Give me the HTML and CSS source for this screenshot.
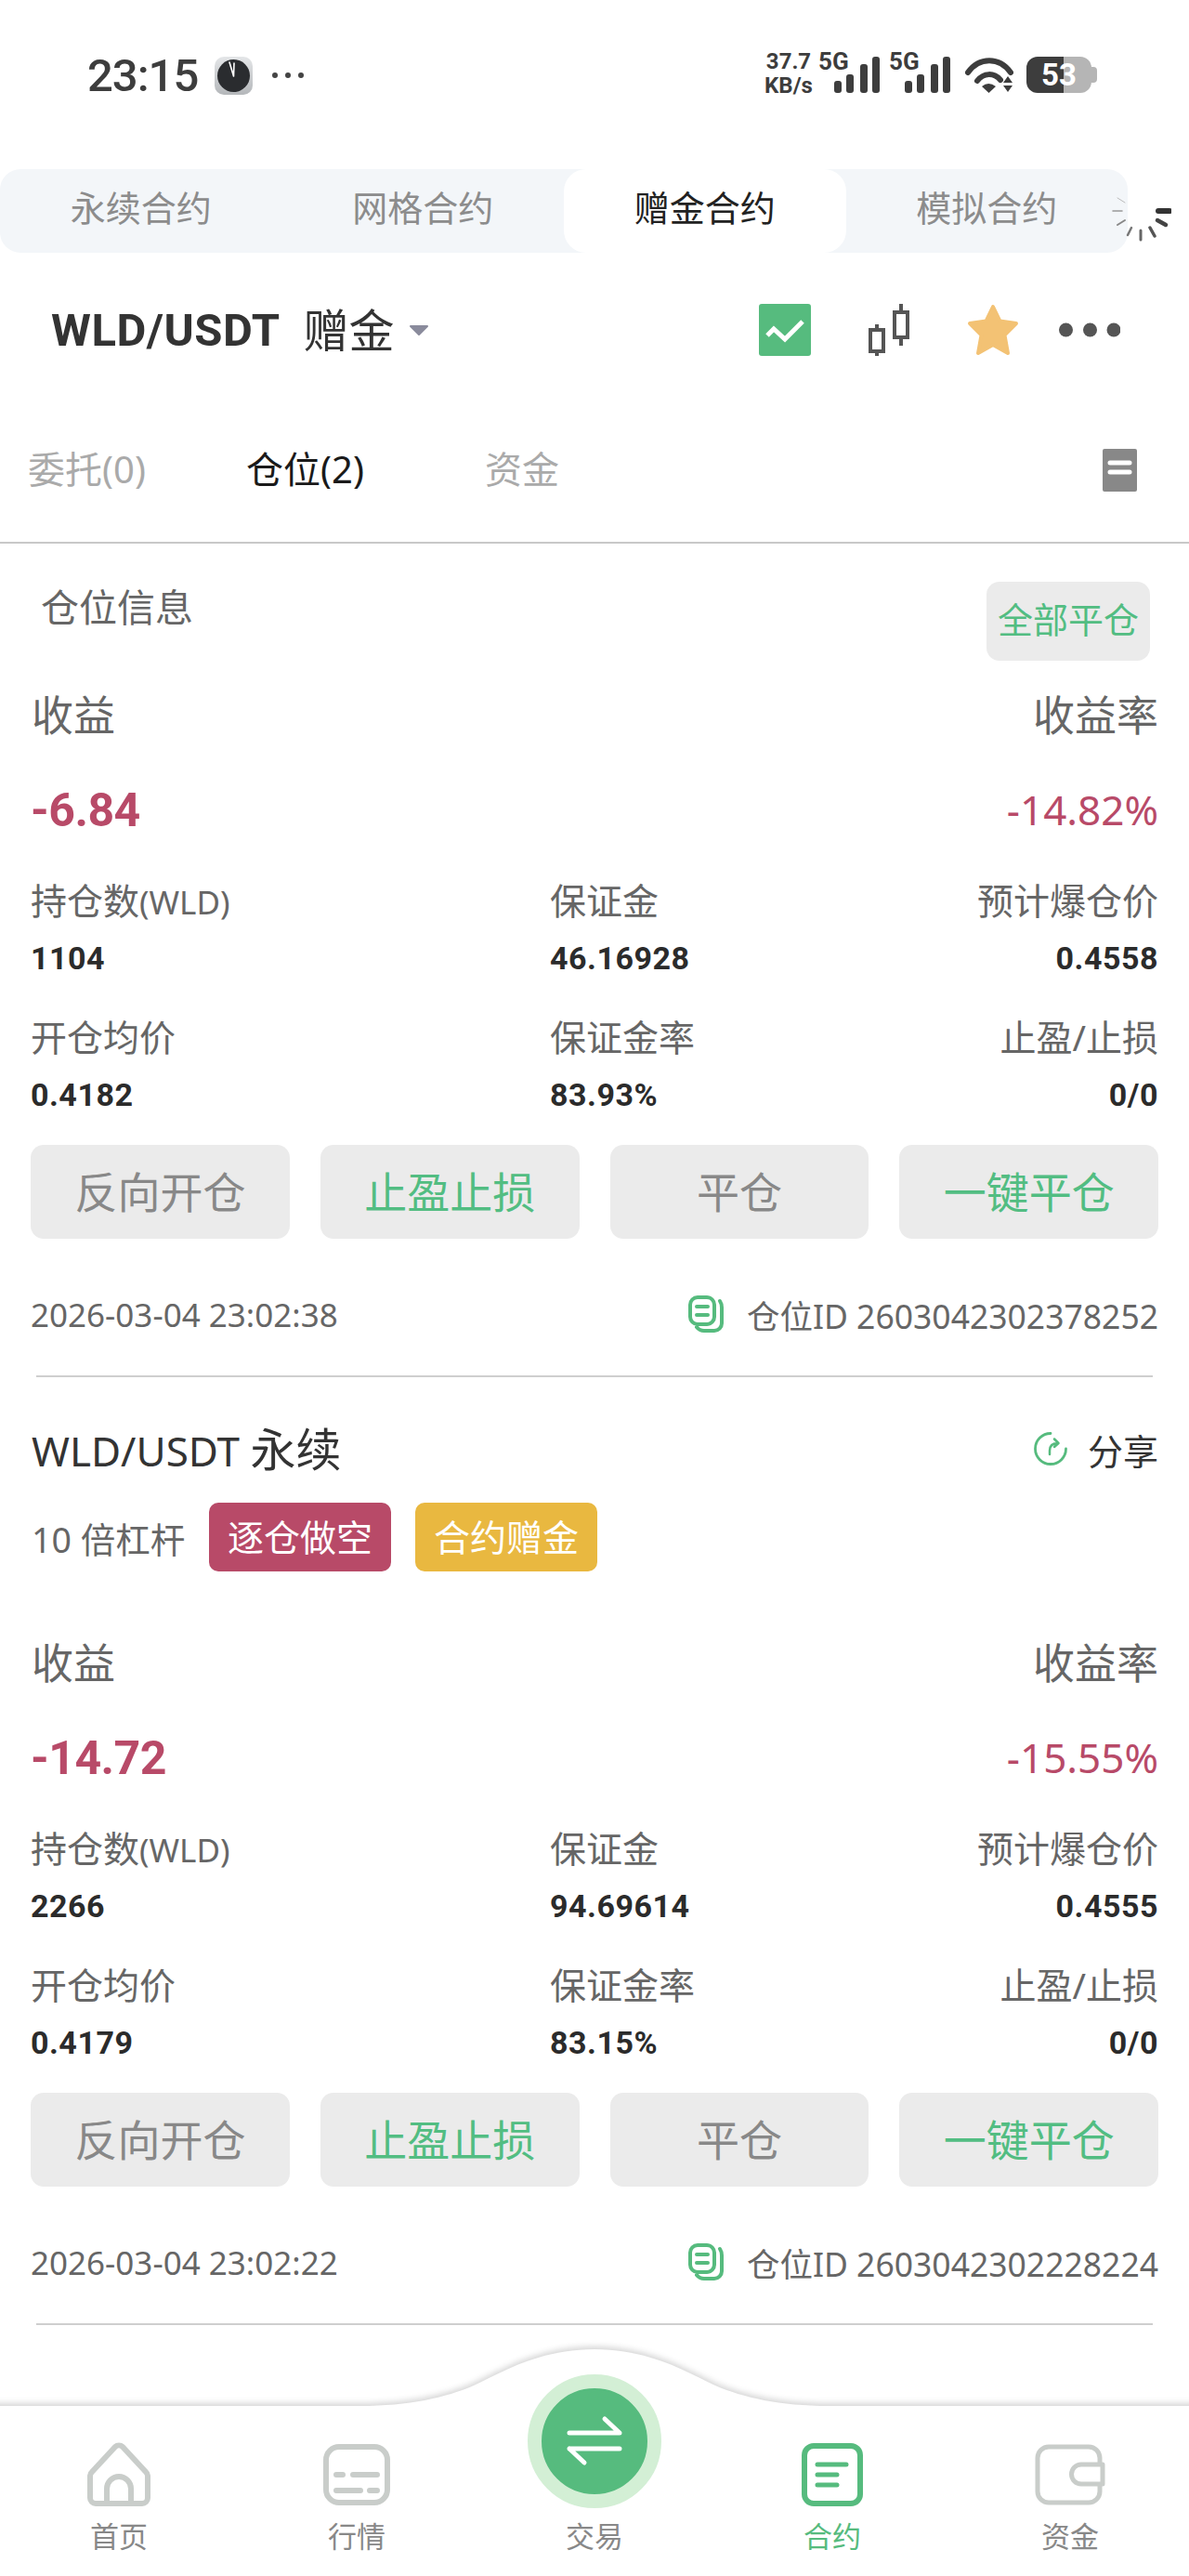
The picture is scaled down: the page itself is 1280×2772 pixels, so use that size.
FILE: index.html
```html
<!DOCTYPE html>
<html>
  <head>
    <meta charset="utf-8">
    <title>赠金合约</title>
    <link rel="stylesheet" href="styles.css">
  </head>
  <body>
    <div class="page">
      <div class="status">
        <span class="time">23:15</span>
        <svg class="clock" width="41" height="41" viewBox="0 0 41 41">
          <defs>
            <linearGradient id="silver" x1="0" y1="0" x2="0" y2="1">
              <stop offset="0" stop-color="#e4e6e8"/>
              <stop offset="1" stop-color="#b4b7ba"/>
            </linearGradient>
          </defs>
          <rect width="41" height="41" rx="10" fill="url(#silver)"/>
          <circle cx="20.5" cy="20.5" r="17.5" fill="#2a2c2f"/>
          <path d="M20.5 21 L16 6 M20.5 21 L21 7" stroke="#fff" stroke-width="1.6" stroke-linecap="round"/>
        </svg>
        <svg class="more" width="34" height="6" viewBox="0 0 34 6">
          <circle cx="3" cy="3" r="3" fill="#444"/>
          <circle cx="17" cy="3" r="3" fill="#444"/>
          <circle cx="31" cy="3" r="3" fill="#444"/>
        </svg>
        <div class="status-right">
          <div class="speed">37.7<br>KB/s</div>
          <div class="signal">
            <span class="net">5G</span>
            <svg width="49" height="39" viewBox="0 0 49 39">
              <rect x="0" y="26" width="8" height="13" rx="3" fill="#3d3d3d"/>
              <rect x="13" y="19" width="8" height="20" rx="3" fill="#3d3d3d"/>
              <rect x="28" y="8" width="8" height="31" rx="3" fill="#3d3d3d"/>
              <rect x="41" y="0" width="8" height="39" rx="3" fill="#3d3d3d"/>
            </svg>
          </div>
          <div class="signal">
            <span class="net">5G</span>
            <svg width="49" height="39" viewBox="0 0 49 39">
              <rect x="0" y="26" width="8" height="13" rx="3" fill="#3d3d3d"/>
              <rect x="13" y="19" width="8" height="20" rx="3" fill="#3d3d3d"/>
              <rect x="28" y="8" width="8" height="31" rx="3" fill="#3d3d3d"/>
              <rect x="41" y="0" width="8" height="39" rx="3" fill="#3d3d3d"/>
            </svg>
          </div>
          <svg class="wifi" width="52" height="38" viewBox="0 0 52 38">
            <path d="M3 16 C15 -1 37 -1 49 16" fill="none" stroke="#3d3d3d" stroke-width="6" stroke-linecap="round"/>
            <path d="M13 25 C20 16 31 16 38 24" fill="none" stroke="#3d3d3d" stroke-width="6" stroke-linecap="round"/>
            <path d="M18 31 Q25 25 33 31 L25.500 38 Z" fill="#3d3d3d"/>
            <path d="M46 20 L51 27 H41 Z M41 30 H51 L46 37 Z" fill="#3d3d3d"/>
          </svg>
          <div class="battery">53</div>
        </div>
      </div>

      <div class="contract-row">
        <div class="contract-tabs">
          <div class="contract-tab">永续合约</div>
          <div class="contract-tab">网格合约</div>
          <div class="contract-tab active">赠金合约</div>
          <div class="contract-tab">模拟合约</div>
        </div>
        <svg class="spinner" width="66" height="66" viewBox="-33 -33 66 66">
          <g stroke-linecap="round">
            <line x1="19" y1="0" x2="31" y2="0" stroke="#333" stroke-width="6"/>
            <line x1="18" y1="10" x2="27" y2="15" stroke="#444" stroke-width="4.500"/>
            <line x1="10" y1="18" x2="15" y2="27" stroke="#555" stroke-width="3.500"/>
            <line x1="0" y1="21" x2="0" y2="31" stroke="#666" stroke-width="3"/>
            <line x1="-10" y1="18" x2="-14" y2="26" stroke="#777" stroke-width="2.500"/>
            <line x1="-17" y1="10" x2="-25" y2="15" stroke="#888" stroke-width="2"/>
            <line x1="-20" y1="0" x2="-30" y2="0" stroke="#999" stroke-width="1.500"/>
            <line x1="-17" y1="-9" x2="-25" y2="-14" stroke="#bbb" stroke-width="1"/>
          </g>
        </svg>
      </div>

      <div class="pair-bar">
        <span class="pair-name">WLD/USDT</span>
        <span class="pair-type">赠金</span>
        <svg class="caret" width="22" height="13" viewBox="0 0 22 13">
          <path d="M2 2 H20 L11 11 Z" fill="#8a8b9c" stroke="#8a8b9c" stroke-width="2" stroke-linejoin="round"/>
        </svg>
        <div class="pair-icons">
          <svg width="56" height="56" viewBox="0 0 56 56">
            <rect width="56" height="56" rx="3" fill="#56bb7e"/>
            <path d="M9 34 L16 27 L28 38 L47 19" fill="none" stroke="#fff" stroke-width="5"/>
          </svg>
          <svg width="44" height="56" viewBox="0 0 44 56">
            <g fill="none" stroke="#555" stroke-width="4">
              <rect x="2" y="28" width="14" height="23"/>
              <path d="M9 22 V28 M9 51 V56"/>
              <rect x="28" y="9" width="14" height="27"/>
              <path d="M35 0 V9 M35 36 V45"/>
            </g>
          </svg>
          <svg width="56" height="56" viewBox="0 0 56 56">
            <polygon points="28,3 35.500,18.500 53,21 40.500,33.500 44,53 28,44 12,53 15.500,33.500 3,21 20.500,18.500" fill="#f3c274" stroke="#f3c274" stroke-width="4" stroke-linejoin="round"/>
          </svg>
          <svg class="pair-more" width="66" height="16" viewBox="0 0 66 16">
            <circle cx="7.500" cy="8" r="7.500" fill="#555"/>
            <circle cx="33.500" cy="8" r="7.500" fill="#555"/>
            <circle cx="59" cy="8" r="7.500" fill="#555"/>
          </svg>
        </div>
      </div>

      <div class="order-tabs">
        <span class="order-tab first">委托(0)</span>
        <span class="order-tab second active">仓位(2)</span>
        <span class="order-tab">资金</span>
        <svg class="order-list" width="37" height="46" viewBox="0 0 37 46">
          <rect width="37" height="46" rx="2" fill="#888"/>
          <path d="M8 15 H29 M8 25 H29" stroke="#fff" stroke-width="5" stroke-linecap="round"/>
        </svg>
      </div>

      <div class="position">
        <div class="all-head">
          <span class="all-title">仓位信息</span>
          <span class="close-all">全部平仓</span>
        </div>
        <div class="pnl-labels"><span>收益</span><span>收益率</span></div>
        <div class="pnl-values"><span class="pnl">-6.84</span><span class="rate">-14.82%</span></div>
        <div class="stats">
          <div class="label">持仓数<small>(WLD)</small></div><div class="label">保证金</div><div class="label right">预计爆仓价</div>
          <div class="value">1104</div><div class="value">46.16928</div><div class="value right">0.4558</div>
          <div class="label">开仓均价</div><div class="label">保证金率</div><div class="label right">止盈/止损</div>
          <div class="value">0.4182</div><div class="value">83.93%</div><div class="value right">0/0</div>
        </div>
        <div class="actions">
          <div class="action">反向开仓</div>
          <div class="action green">止盈止损</div>
          <div class="action">平仓</div>
          <div class="action green">一键平仓</div>
        </div>
        <div class="foot">
          <span>2026-03-04 23:02:38</span>
          <span class="pos-id">
            <svg width="38" height="40" viewBox="0 0 38 40">
              <rect x="2" y="2" width="26" height="29" rx="8" fill="none" stroke="#56bb7e" stroke-width="4"/>
              <path d="M34 6 Q36 9 36 13 V30 A8 8 0 0 1 28 38 H17 Q12 38 9 34 M9 12 H21 M9 21 H21" fill="none" stroke="#56bb7e" stroke-width="4" stroke-linecap="round"/>
            </svg>
            <span>仓位ID 2603042302378252</span>
          </span>
        </div>
      </div>

      <div class="position next">
        <div class="pos-head">
          <span class="pos-title">WLD/USDT <b>永续</b></span>
          <span class="share">
            <svg width="38" height="38" viewBox="0 0 38 38">
              <path d="M19 2.500 A16.500 16.500 0 1 0 35.500 19" fill="none" stroke="#56bb7e" stroke-width="2.800" stroke-linecap="round"/>
              <path d="M18 25 V21 Q18 13 27 13 M23 8.500 L27.500 13 L23 17" fill="none" stroke="#56bb7e" stroke-width="2.500" stroke-linecap="round" stroke-linejoin="round"/>
            </svg>
            <span>分享</span>
          </span>
        </div>
        <div class="pos-tags">
          <span class="leverage">10 倍杠杆</span>
          <span class="tag red">逐仓做空</span>
          <span class="tag gold">合约赠金</span>
        </div>
        <div class="pnl-labels"><span>收益</span><span>收益率</span></div>
        <div class="pnl-values"><span class="pnl">-14.72</span><span class="rate">-15.55%</span></div>
        <div class="stats">
          <div class="label">持仓数<small>(WLD)</small></div><div class="label">保证金</div><div class="label right">预计爆仓价</div>
          <div class="value">2266</div><div class="value">94.69614</div><div class="value right">0.4555</div>
          <div class="label">开仓均价</div><div class="label">保证金率</div><div class="label right">止盈/止损</div>
          <div class="value">0.4179</div><div class="value">83.15%</div><div class="value right">0/0</div>
        </div>
        <div class="actions">
          <div class="action">反向开仓</div>
          <div class="action green">止盈止损</div>
          <div class="action">平仓</div>
          <div class="action green">一键平仓</div>
        </div>
        <div class="foot">
          <span>2026-03-04 23:02:22</span>
          <span class="pos-id">
            <svg width="38" height="40" viewBox="0 0 38 40">
              <rect x="2" y="2" width="26" height="29" rx="8" fill="none" stroke="#56bb7e" stroke-width="4"/>
              <path d="M34 6 Q36 9 36 13 V30 A8 8 0 0 1 28 38 H17 Q12 38 9 34 M9 12 H21 M9 21 H21" fill="none" stroke="#56bb7e" stroke-width="4" stroke-linecap="round"/>
            </svg>
            <span>仓位ID 2603042302228224</span>
          </span>
        </div>
      </div>

      <div class="tabbar">
        <svg class="tabbar-bg" width="1280" height="247" viewBox="0 0 1280 247">
          <path d="M-10 64 H388 C440 64 480 55 510 42 C540 28 580 3 640 3 C700 3 740 28 770 42 C800 55 840 64 892 64 H1290 V257 H-10 Z" fill="#fff"/>
        </svg>
        <div class="tabbar-items">
          <div class="nav-item">
            <div class="nav-icon">
              <svg width="70" height="70" viewBox="0 0 70 70">
                <g fill="none" stroke="#c9cdca" stroke-width="6" stroke-linejoin="round">
                  <path d="M31 5 a6 6 0 0 1 8 0 L64 32 a6 6 0 0 1 2 4 V60 a6 6 0 0 1 -6 6 H10 a6 6 0 0 1 -6 -6 V36 a6 6 0 0 1 2 -4 Z"/>
                  <path d="M22 66 V50 a13 13 0 0 1 26 0 V66"/>
                </g>
              </svg>
            </div>
            <span>首页</span>
          </div>
          <div class="nav-item">
            <div class="nav-icon">
              <svg width="72" height="66" viewBox="0 0 72 66">
                <rect x="3" y="3" width="66" height="60" rx="14" fill="none" stroke="#c9cdca" stroke-width="6"/>
                <path d="M14 33 H21 M32 33 H58 M14 50 H40 M50 50 H58" stroke="#c9cdca" stroke-width="6" stroke-linecap="round"/>
              </svg>
            </div>
            <span>行情</span>
          </div>
          <div class="nav-item">
            <div class="nav-icon">
              <div class="trade-btn">
                <svg width="70" height="60" viewBox="0 0 70 60">
                  <path d="M8 21 H62 L46 6 M8 38 H62 M8 38 L24 53" fill="none" stroke="#fff" stroke-width="5" stroke-linecap="round" stroke-linejoin="round"/>
                </svg>
              </div>
            </div>
            <span>交易</span>
          </div>
          <div class="nav-item active">
            <div class="nav-icon">
              <svg width="66" height="68" viewBox="0 0 66 68">
                <rect x="3" y="3" width="60" height="62" rx="10" fill="none" stroke="#56bb7e" stroke-width="6"/>
                <path d="M17 23 H48 M17 34 H38 M17 45 H38" stroke="#56bb7e" stroke-width="5" stroke-linecap="round"/>
              </svg>
            </div>
            <span>合约</span>
          </div>
          <div class="nav-item">
            <div class="nav-icon">
              <svg width="76" height="66" viewBox="0 0 76 66">
                <rect x="3" y="3" width="67" height="60" rx="12" fill="none" stroke="#c9cdca" stroke-width="5"/>
                <path d="M73 22 H50 a10.500 10.500 0 0 0 0 21 H73 Z" fill="#fff" stroke="#c9cdca" stroke-width="5" stroke-linejoin="round"/>
              </svg>
            </div>
            <span>资金</span>
          </div>
        </div>
      </div>
    </div>
  </body>
</html>
```

FILE: styles.css
```css
* {
    box-sizing: border-box;
}

body {
    margin: 0;
    background: #fff;
    font-family: "Noto Sans", "Noto Sans CJK SC", sans-serif;
    color: #333;
}

.page {
    position: relative;
    width: 1280px;
    height: 2772px;
    overflow: hidden;
}

/* status bar */
.status {
    display: flex;
    align-items: center;
    height: 162px;
    padding: 0 99px 0 94px;
}
.time {
    font-family: Roboto, sans-serif;
    font-weight: 500;
    font-size: 49px;
    letter-spacing: -1px;
    color: #3d3d3d;
}
.clock {
    margin-left: 18px;
}
.more {
    margin-left: 21px;
}
.status-right {
    display: flex;
    align-items: flex-end;
    margin-left: auto;
    margin-bottom: 6px;
    height: 44px;
    color: #3d3d3d;
    font-family: Roboto, sans-serif;
    font-weight: 700;
    font-size: 24px;
}
.speed {
    width: 52px;
    line-height: 26px;
    text-align: center;
    margin-right: 6px;
    margin-bottom: -5px;
}
.signal {
    display: flex;
    align-items: flex-start;
    width: 66px;
    margin-right: 10px;
}
.signal svg {
    margin-left: -13px;
    display: block;
}
.net {
    margin-top: -5px;
    line-height: 20px;
    width: 30px;
    flex: none;
    font-size: 26px;
}
.wifi {
    margin-left: 6px;
    margin-right: 14px;
}
.battery {
    position: relative;
    width: 70px;
    height: 39px;
    margin-right: 6px;
    border-radius: 12px;
    background: linear-gradient(90deg, #3d3d3d 40px, #b5b5b5 40px);
    color: #fff;
    font-size: 33px;
    line-height: 39px;
    text-align: center;
}
.battery::after {
    content: "";
    position: absolute;
    left: 70px;
    top: 11px;
    width: 6px;
    height: 17px;
    border-radius: 0 4px 4px 0;
    background: #b5b5b5;
}

/* contract type tabs */
.contract-row {
    position: relative;
    margin-top: 20px;
}
.contract-tabs {
    display: flex;
    width: 1214px;
    height: 90px;
    border-radius: 22px;
    background: #f3f6f9;
}
.contract-tab {
    flex: 1;
    font-size: 38px;
    line-height: 83px;
    text-align: center;
    color: #8c8c8c;
}
.contract-tab.active {
    background: #fff;
    border-radius: 24px;
    color: #222;
}
.spinner {
    position: absolute;
    left: 1195px;
    top: 12px;
}

/* pair header */
.pair-bar {
    display: flex;
    align-items: center;
    height: 166px;
    padding: 0 74px 0 55px;
}
.pair-name {
    font-family: Roboto, sans-serif;
    font-weight: 700;
    font-size: 49px;
    letter-spacing: 0.5px;
    color: #333;
}
.pair-type {
    margin-left: 25px;
    margin-bottom: 6px;
    font-size: 49px;
    color: #333;
}
.caret {
    margin-left: 15px;
}
.pair-icons {
    display: flex;
    align-items: center;
    gap: 62px;
    margin-left: auto;
}
.pair-more {
    margin-left: -19px;
}

/* order tabs */
.order-tabs {
    display: flex;
    align-items: center;
    height: 147px;
    padding: 0 56px 16px 30px;
    border-bottom: 2px solid #c8c8c8;
}
.order-tab {
    font-size: 40px;
    color: #aaa;
}
.order-tab.active {
    color: #1a1a1a;
}
.order-tab.first {
    width: 235px;
}
.order-tab.second {
    width: 257px;
}
.order-list {
    margin-left: auto;
    margin-bottom: -7px;
}

/* position block */
.position {
    padding: 0 33px 43px;
    border-bottom: 2px solid transparent;
    position: relative;
}
.position::after {
    content: "";
    position: absolute;
    left: 39px;
    right: 39px;
    bottom: 0;
    border-bottom: 2px solid #cfcfcf;
}
.all-head {
    display: flex;
    align-items: flex-start;
    justify-content: space-between;
    height: 85px;
    margin-top: 41px;
    padding-left: 11px;
}
.all-title {
    font-size: 41px;
    line-height: 55px;
    color: #666;
}
.close-all {
    width: 176px;
    height: 85px;
    margin-right: 9px;
    border-radius: 14px;
    background: #ebebeb;
    color: #52bd82;
    font-size: 38px;
    line-height: 81px;
    text-align: center;
}
.pnl-labels,
.pnl-values {
    display: flex;
    justify-content: space-between;
    align-items: center;
}
.pnl-labels {
    height: 50px;
    margin-top: 35px;
    padding: 0 0 7px 1px;
    font-size: 45px;
    color: #666;
}
.pnl-values {
    height: 60px;
    margin-top: 46px;
}
.pnl {
    font-family: Roboto, sans-serif;
    font-weight: 700;
    font-size: 50px;
    letter-spacing: -0.5px;
    color: #b84a68;
}
.rate {
    padding-bottom: 3px;
    font-size: 44px;
    color: #b84a68;
}
.stats {
    display: grid;
    grid-template-columns: 559px 1fr auto;
    grid-template-rows: 46px 63px 46px 40px;
    row-gap: 19px;
    align-items: center;
    margin-top: 44px;
}
.label {
    padding-bottom: 4px;
    font-size: 39px;
    color: #666;
}
.label small {
    font-size: 35px;
}
.value {
    align-self: start;
    font-family: Roboto, sans-serif;
    font-weight: 700;
    font-size: 34px;
    line-height: 40px;
    letter-spacing: 0.5px;
    color: #2b2b2b;
}
.right {
    text-align: right;
}
.actions {
    display: grid;
    grid-template-columns: repeat(4, 1fr);
    gap: 33px;
    margin-top: 34px;
}
.action {
    height: 101px;
    border-radius: 14px;
    background: #ebebeb;
    color: #888;
    font-size: 46px;
    line-height: 101px;
    text-align: center;
}
.action.green {
    color: #52bd82;
}
.foot {
    display: flex;
    justify-content: space-between;
    align-items: center;
    height: 50px;
    margin-top: 56px;
    font-size: 35px;
    color: #666;
}
.pos-id {
    display: flex;
    align-items: center;
    gap: 25px;
    font-size: 35.5px;
}

/* second position header */
.pos-head {
    display: flex;
    justify-content: space-between;
    align-items: center;
    height: 50px;
    margin-top: 50px;
    padding-left: 1px;
}
.pos-title {
    padding-bottom: 5px;
    font-size: 44px;
    color: #333;
}
.pos-title b {
    font-weight: 400;
    font-size: 49px;
}
.share {
    display: flex;
    align-items: center;
    gap: 21px;
    font-size: 38px;
}
.pos-tags {
    display: flex;
    align-items: center;
    height: 74px;
    margin-top: 33px;
    padding-left: 1px;
}
.leverage {
    width: 191px;
    font-size: 37.5px;
    color: #666;
}
.tag {
    width: 196px;
    height: 74px;
    margin-right: 26px;
    border-radius: 10px;
    color: #fff;
    font-size: 39px;
    line-height: 74px;
    text-align: center;
}
.tag.red {
    background: #b84a68;
}
.tag.gold {
    background: #e9b840;
}
.next .pnl-labels {
    margin-top: 75px;
}

/* bottom nav */
.tabbar {
    position: absolute;
    left: 0;
    right: 0;
    bottom: 0;
    height: 247px;
}
.tabbar-bg {
    position: absolute;
    left: 0;
    top: 0;
    overflow: visible;
    filter: drop-shadow(0 -3px 3px rgba(0, 0, 0, 0.16));
}
.tabbar-items {
    position: absolute;
    left: 0;
    right: 0;
    bottom: 0;
    display: flex;
    padding-bottom: 20px;
}
.nav-item {
    flex: 1;
    display: flex;
    flex-direction: column;
    align-items: center;
    font-size: 31px;
    line-height: 46px;
    color: #888;
}
.nav-item.active {
    color: #56bb7e;
}
.nav-icon {
    display: flex;
    align-items: center;
    justify-content: center;
    height: 70px;
    margin-bottom: 8px;
}
.trade-btn {
    display: flex;
    align-items: center;
    justify-content: center;
    flex: none;
    width: 144px;
    height: 144px;
    margin-top: -72px;
    border: 15px solid #d3efd5;
    border-radius: 50%;
    background: #56bb7e;
}
```
